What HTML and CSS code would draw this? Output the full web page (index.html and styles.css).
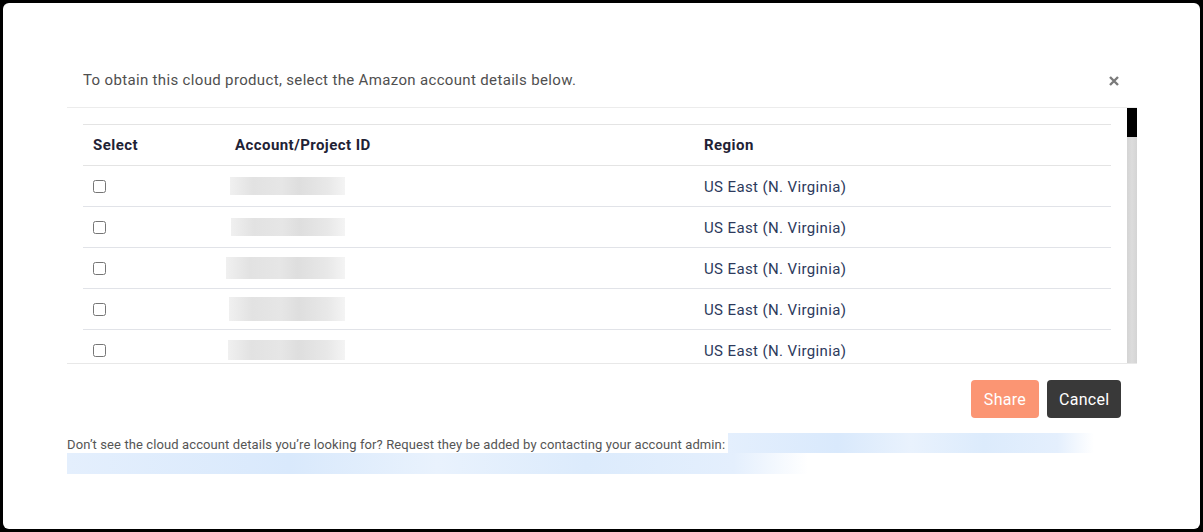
FILE: index.html
```html
<!DOCTYPE html>
<html lang="en">
<head>
<meta charset="utf-8">
<title>Share cloud product</title>
<link rel="stylesheet" href="styles.css">
</head>
<body>
<div class="modal">
  <div class="modal-header">
    <p class="intro">To obtain this cloud product, select the Amazon account details below.</p>
    <button class="close" aria-label="Close">
      <svg width="10" height="10" viewBox="0 0 10 10"><path d="M1 1L9 9M9 1L1 9" stroke="#7a7a7a" stroke-width="2.4" stroke-linecap="butt"/></svg>
    </button>
  </div>
  <div class="scroll">
    <div class="scroll-body">
      <table class="accounts">
        <thead>
          <tr><th class="c-sel">Select</th><th class="c-id">Account/Project ID</th><th>Region</th></tr>
        </thead>
        <tbody>
          <tr><td><input type="checkbox"></td><td><span class="blur b1"></span></td><td class="region">US East (N. Virginia)</td></tr>
          <tr><td><input type="checkbox"></td><td><span class="blur b2"></span></td><td class="region">US East (N. Virginia)</td></tr>
          <tr><td><input type="checkbox"></td><td><span class="blur b3"></span></td><td class="region">US East (N. Virginia)</td></tr>
          <tr><td><input type="checkbox"></td><td><span class="blur b4"></span></td><td class="region">US East (N. Virginia)</td></tr>
          <tr><td><input type="checkbox"></td><td><span class="blur b5"></span></td><td class="region">US East (N. Virginia)</td></tr>
        </tbody>
      </table>
    </div>
    <div class="scrollbar"><div class="thumb"></div></div>
  </div>
  <div class="actions">
    <button class="btn btn-share">Share</button>
    <button class="btn btn-cancel">Cancel</button>
  </div>
  <p class="help">Don’t see the cloud account details you’re looking for? Request they be added by contacting your account admin: <span class="mail mail-a"></span></p>
  <div class="mail mail-b"></div>
</div>
</body>
</html>
```

FILE: styles.css
```css
html, body {
  margin: 0;
  padding: 0;
}
body {
  background: #000;
  font-family: Roboto, "Liberation Sans", sans-serif;
  height: 532px;
  overflow: hidden;
}
.modal {
  box-sizing: border-box;
  margin: 3px 3px 0 3px;
  width: 1197px;
  height: 526px;
  background: #fff;
  border-radius: 6px;
  padding: 67px 63px 0 64px;
}
.modal-header {
  display: flex;
  align-items: center;
  justify-content: space-between;
  padding: 0 18px 17px 16px;
  border-bottom: 1px solid #ececec;
}
.intro {
  margin: 0;
  font-size: 15px;
  line-height: 20px;
  letter-spacing: 0.34px;
  color: #4f4f4f;
}
.close {
  border: 0;
  background: none;
  padding: 0;
  width: 10px;
  height: 10px;
  display: flex;
  margin-top: 2px;
}
.scroll {
  display: flex;
  height: 255px;
  border-bottom: 1px solid #e8e8e8;
}
.scroll-body {
  flex: 1;
  overflow: hidden;
  padding: 16px 16px 0 16px;
}
.scrollbar {
  width: 10px;
  background: linear-gradient(90deg, #d4d4d4, #dcdcdc 50%, #d4d4d4);
}
.thumb {
  height: 29px;
  background: #000;
}
.accounts {
  width: 100%;
  border-collapse: collapse;
  font-size: 15px;
  letter-spacing: 0.38px;
}
.accounts th {
  text-align: left;
  font-weight: 700;
  color: #1f2235;
  height: 40px;
  padding: 0 10px;
  border-top: 1px solid #e4e4e4;
  border-bottom: 1px solid #e4e4e4;
  letter-spacing: 0.44px;
}
.accounts th.c-sel { width: 122px; }
.accounts th.c-id { width: 449px; }
.accounts td {
  height: 40px;
  padding: 0 10px;
  border-bottom: 1px solid #e1e3e8;
  vertical-align: middle;
}
.accounts td.region {
  height: 38px;
  padding-top: 2px;
}
.accounts input[type="checkbox"] {
  margin: 0;
  width: 13px;
  height: 13px;
  display: block;
}
.region {
  color: #2d3a5c;
}
.blur {
  display: block;
  height: 18px;
  background: linear-gradient(90deg, #f0f0f0 0%, #e2e2e2 20%, #e6e6e6 45%, #dedede 60%, #e8e8e8 85%, #f4f4f4 100%);
  filter: blur(0.6px);
}
.b1 { margin-left: -5px; width: 115px; }
.b2 { margin-left: -4px; width: 114px; }
.b3 { margin-left: -9px; width: 119px; height: 22px; }
.b4 { margin-left: -6px; width: 116px; height: 24px; }
.b5 { margin-left: -7px; width: 117px; height: 20px; }
.actions {
  display: flex;
  justify-content: flex-end;
  gap: 8px;
  padding: 16px 16px 0 0;
}
.btn {
  border: 0;
  border-radius: 4px;
  height: 38px;
  font-family: Roboto, "Liberation Sans", sans-serif;
  font-size: 16px;
  letter-spacing: 0.3px;
  color: #fff;
  padding: 0 12px;
}
.btn-share {
  background: #fb9573;
  width: 68px;
}
.btn-cancel {
  background: #393939;
  width: 74px;
}
.help {
  margin: 17px 0 0 0;
  font-size: 13px;
  line-height: 19px;
  letter-spacing: 0.1px;
  color: #555;
}
.mail {
  background: linear-gradient(90deg, #e4effd 0%, #d9e9fc 30%, #e9f2fd 50%, #dcebfc 70%, #e4effd 90%, #ffffff 100%);
}
.mail-a {
  display: inline-block;
  vertical-align: top;
  width: 366px;
  height: 20px;
  margin-top: -2px;
}
.mail-b {
  width: 741px;
  height: 21px;
  margin-top: -1px;
}
```
